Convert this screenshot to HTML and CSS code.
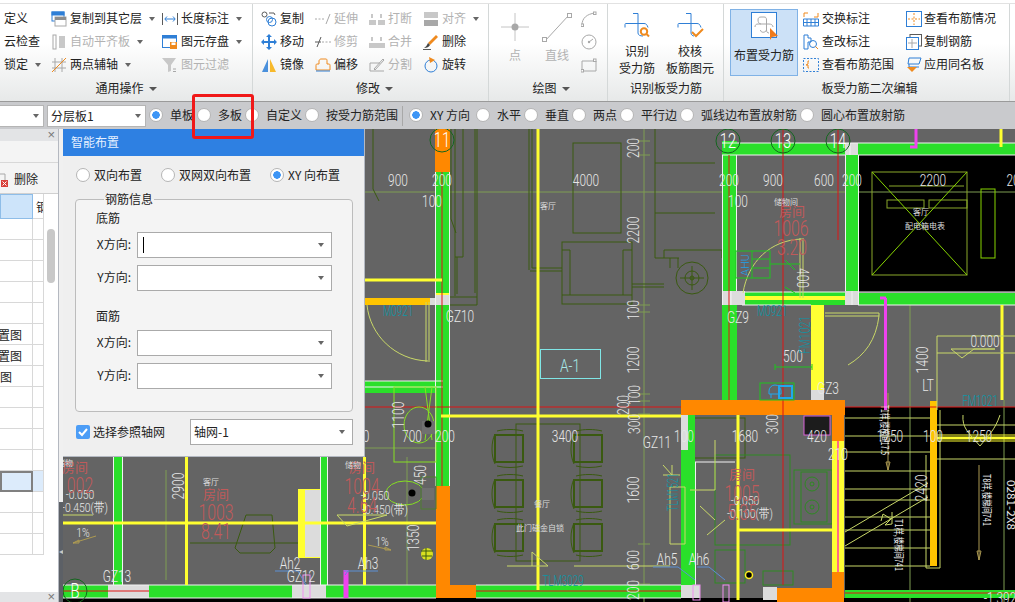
FILE: index.html
```html
<!DOCTYPE html>
<html lang="zh">
<head>
<meta charset="utf-8">
<title>布置受力筋</title>
<link rel="stylesheet" href="styles.css">
</head>
<body>
<div class="app">
  <div class="topline"></div>
  <div class="ribbon">
    <section class="group g1">
      <div class="body">
        <div class="col cola">
          <div class="item">定义</div>
          <div class="item">云检查</div>
          <div class="item">锁定<i class="caret"></i></div>
        </div>
        <div class="col colb">
          <div class="item"><svg class="ic" viewBox="0 0 16 16"><rect class="sb fb" x="1" y="1" width="12" height="3"/><rect class="sb" x="1" y="1" width="12" height="9"/><rect class="fw sg" x="4" y="6" width="11" height="9"/><rect class="fgd" x="4" y="6" width="11" height="3"/></svg>复制到其它层<i class="caret"></i></div>
          <div class="item off"><svg class="ic" viewBox="0 0 16 16"><rect class="sg" x="2" y="1" width="3" height="14"/><rect class="fgl" x="8" y="2" width="6" height="12"/></svg>自动平齐板<i class="caret"></i></div>
          <div class="item"><svg class="ic" viewBox="0 0 16 16"><path class="sg" d="M4 1v14M11 1v14M1 5h14M1 11h14"/><path class="so" d="M1 15L15 1"/></svg>两点辅轴<i class="caret"></i></div>
        </div>
        <div class="col colc">
          <div class="item"><svg class="ic" viewBox="0 0 16 16"><path class="sd" d="M.5 2v12M15.500 2v12"/><path class="sb" d="M3 8h10M5 5.500L2.800 8 5 10.500M11 5.500L13.200 8 11 10.500"/></svg>长度标注<i class="caret"></i></div>
          <div class="item"><svg class="ic" viewBox="0 0 16 16"><rect class="sb" x=".5" y="1.500" width="14" height="12"/><rect class="fb" x=".5" y="1.500" width="14" height="3"/><rect class="fo" x="8" y="8" width="7" height="7"/><rect class="fw" x="9.500" y="8.500" width="4" height="2.500"/></svg>图元存盘<i class="caret"></i></div>
          <div class="item off"><svg class="ic" viewBox="0 0 16 16"><path class="fgl" d="M0 1h14L9 8v6l-3 1V8z"/><path class="sg" d="M11 12h3M11 14.500h3"/></svg>图元过滤</div>
        </div>
      </div>
      <div class="label">通用操作<i class="caret dark"></i></div>
    </section>

    <section class="group g2">
      <div class="body">
        <div class="col c54">
          <div class="item"><svg class="ic" viewBox="0 0 16 16"><circle class="sd" cx="3.500" cy="3.500" r="2.500"/><circle class="sb" cx="11" cy="11" r="4"/><circle class="sb" cx="8.500" cy="8.500" r="3"/><path class="sd" d="M8 2h5l1 2"/></svg>复制</div>
          <div class="item"><svg class="ic" viewBox="0 0 16 16"><path class="fb" d="M8 0l3 3H9v4h4V5l3 3-3 3V9H9v4h2l-3 3-3-3h2V9H3v2L0 8l3-3v2h4V3H5z"/></svg>移动</div>
          <div class="item"><svg class="ic" viewBox="0 0 16 16"><path class="fb2" d="M7 2v13H1z"/><path class="fy" d="M9 2v13h6z"/></svg>镜像</div>
        </div>
        <div class="col c54">
          <div class="item off"><svg class="ic" viewBox="0 0 16 16"><path class="sg dash" d="M0 8h10"/><path class="sg" d="M11 13l4-10"/></svg>延伸</div>
          <div class="item off"><svg class="ic" viewBox="0 0 16 16"><path class="sd" d="M2 13l4-10"/><path class="sd" d="M0 8h6"/><path class="sg dash" d="M7 8h9"/></svg>修剪</div>
          <div class="item"><svg class="ic" viewBox="0 0 16 16"><path class="so" d="M6 2h5c1 0 1 1 1 2v3h2c1 0 1 1 1 2v4H1V9c0-1 0-2 1-2h2V4c0-1 1-2 2-2z"/><path class="sb" d="M1 14h14"/></svg>偏移</div>
        </div>
        <div class="col c54">
          <div class="item off"><svg class="ic" viewBox="0 0 16 16"><path class="fgl" d="M0 9h7v5H0zM9 9h7v5H9zM2 3h2v4H2zM11 3h2v4h-2z"/></svg>打断</div>
          <div class="item off"><svg class="ic" viewBox="0 0 16 16"><path class="fgl" d="M0 9h16v5H0zM2 3h2v4H2zM11 3h2v4h-2z"/></svg>合并</div>
          <div class="item off"><svg class="ic" viewBox="0 0 16 16"><path class="sg" d="M1 14V6l10 0M1 14h14M5 12L14 2l1 1-9 10z"/></svg>分割</div>
        </div>
        <div class="col c54">
          <div class="item off"><svg class="ic" viewBox="0 0 16 16"><rect class="fgl" x="1" y="1" width="14" height="6"/><rect class="fg" x="1" y="9" width="14" height="6"/></svg>对齐<i class="caret"></i></div>
          <div class="item"><svg class="ic" viewBox="0 0 16 16"><path class="fo" d="M5 9l8-8 2 2-8 8z"/><path class="fdk" d="M5 9l2 2c-1 2-3 3-6 3 2-1 3-3 4-5z"/><path class="sd" d="M0 15.500h8"/></svg>删除</div>
          <div class="item"><svg class="ic" viewBox="0 0 16 16"><circle class="sb" cx="8" cy="9" r="6"/><path class="fo" d="M6 0l6 3-5 3z"/></svg>旋转</div>
        </div>
      </div>
      <div class="label">修改<i class="caret dark"></i></div>
    </section>

    <section class="group g3">
      <div class="body">
        <div class="big off w40">
          <div class="bigicon"><svg class="ic32" viewBox="0 0 32 32"><path class="sgl" d="M16 2v28M2 16h28"/><circle class="fg" cx="16" cy="16" r="3.500"/></svg></div>
          <div>点</div>
        </div>
        <div class="big off w40 ml2">
          <div class="bigicon"><svg class="ic32" viewBox="0 0 32 32"><path class="sg" d="M4 30L28 4"/><rect class="fw sg" x="1.500" y="26.500" width="4" height="4"/><rect class="fw sg" x="26.500" y="2.500" width="4" height="4"/></svg></div>
          <div>直线</div>
        </div>
        <div class="col w24">
          <div class="item center"><svg class="ic" viewBox="0 0 16 16"><path class="sg" d="M1 14C1 7 6 3 14 2"/><rect class="fw sg" x="0" y="13" width="2.500" height="2.500"/><rect class="fw sg" x="12.500" y="1" width="2.500" height="2.500"/></svg></div>
          <div class="item center"><svg class="ic" viewBox="0 0 16 16"><circle class="sg" cx="8" cy="8" r="7"/><circle class="fg" cx="8" cy="8" r="1.200"/><path class="sg" d="M8 8l4-3"/></svg></div>
          <div class="item center"><svg class="ic" viewBox="0 0 16 16"><path class="sg" d="M1 4h14v10H1z"/><rect class="fw sg" x="0" y="12.500" width="2.500" height="2.500"/><rect class="fw sg" x="12.500" y="2" width="2.500" height="2.500"/></svg></div>
        </div>
      </div>
      <div class="label">绘图<i class="caret dark"></i></div>
    </section>

    <section class="group g4">
      <div class="body">
        <div class="big w52 ml2">
          <div class="bigicon"><svg class="ic32" viewBox="0 0 32 32"><path class="sb" d="M12 4.500h5V24c0 2 2 3 5 3M4 18.500V15.500c0-1 .5-1 1-1H23c2 0 3 1 4 4"/><circle class="so2" cx="23" cy="22.500" r="3.200"/><path class="so2" d="M25.500 25l2.500 2.500"/></svg></div>
          <div>识别</div><div>受力筋</div>
        </div>
        <div class="big w52">
          <div class="bigicon"><svg class="ic32" viewBox="0 0 32 32"><path class="sb" d="M12 4.500h5V24c0 2 2 3 3 3M4 18.500V15.500c0-1 .5-1 1-1H23c2 0 3 1 4 4"/><path class="so2" d="M18 23l4 4 7-7"/></svg></div>
          <div>校核</div><div>板筋图元</div>
        </div>
      </div>
      <div class="label">识别板受力筋</div>
    </section>

    <section class="group g5">
      <div class="body">
        <div class="bigbtn">
          <svg class="ic-big" viewBox="0 0 34 30"><rect class="fw sb" x=".5" y=".5" width="25" height="25"/><path class="sg" d="M10 5h3c2 0 2.500 1 2.500 3v10c0 2 1 3 2.500 3M4 15c0-2 1-3 3-3h11c2 0 4 1 4 3M10 5c-2 0-3 1-3 3s1 4 3 4M15.500 18c-1 3-6 3-6 0"/><path class="fo2" d="M19 16l8 8-6 1-2 3z"/></svg>
          <div class="bigbtn-label">布置受力筋</div>
        </div>
        <div class="col w103">
          <div class="item"><svg class="ic" viewBox="0 0 16 16"><path class="sb" d="M.5 8h15v7H.5zM4 8v7M8 8v7M12 8v7M.5 11.500h15"/><path class="so" d="M1 6V2h4M15 2v4h-4"/></svg>交换标注</div>
          <div class="item"><svg class="ic" viewBox="0 0 16 16"><path class="sb" d="M1 1h4v3h3v4H5v7H1z"/><circle class="sb" cx="10" cy="10" r="3.500"/><path class="so" d="M12.500 12.500L15 15"/></svg>查改标注</div>
          <div class="item"><svg class="ic" viewBox="0 0 16 16"><rect class="sb dash2" x=".5" y="1.500" width="15" height="13"/><path class="so" d="M6 4H5v3L3 8h2v3h1"/></svg>查看布筋范围</div>
        </div>
        <div class="col tight">
          <div class="item"><svg class="ic" viewBox="0 0 16 16"><rect class="sb" x=".5" y=".5" width="15" height="15"/><path class="so dash2" d="M8 2v12M2 8h12"/></svg>查看布筋情况</div>
          <div class="item"><svg class="ic" viewBox="0 0 16 16"><rect class="sd" x="4" y=".5" width="11.500" height="11.500"/><rect class="fw sb" x=".5" y="3.500" width="12" height="12"/><path class="sg" d="M6 5v9M2 9h9"/></svg>复制钢筋</div>
          <div class="item"><svg class="ic" viewBox="0 0 16 16"><path class="sb" d="M3 1h12l-2 6H2zM3 7v3h10"/><path class="fo" d="M1 10h10l-5 5z"/></svg>应用同名板</div>
        </div>
      </div>
      <div class="label">板受力筋二次编辑</div>
    </section>
  </div>

  <div class="optbar">
    <div class="combo combo1"><i class="caret"></i></div>
    <div class="combo combo2"><span>分层板1</span><i class="caret"></i></div>
    <div class="opt"><i class="radio on"></i>单板</div>
    <div class="opt"><i class="radio"></i>多板</div>
    <div class="opt"><i class="radio"></i>自定义</div>
    <div class="opt"><i class="radio"></i>按受力筋范围</div>
    <div class="vsep"></div>
    <div class="opt xy"><i class="radio on"></i>XY 方向</div>
    <div class="opt"><i class="radio"></i>水平</div>
    <div class="opt"><i class="radio"></i>垂直</div>
    <div class="opt"><i class="radio"></i>两点</div>
    <div class="opt"><i class="radio"></i>平行边</div>
    <div class="opt"><i class="radio"></i>弧线边布置放射筋</div>
    <div class="opt"><i class="radio"></i>圆心布置放射筋</div>
  </div>

  <div class="main">
    <aside class="panel">
      <div class="phead">×</div>
      <div class="pblank"></div>
      <div class="ptools"><svg class="delicon" viewBox="0 0 8 14"><path class="sg" d="M-3 1h8v7"/><rect class="fr" x="1" y="7" width="7" height="7"/><path class="swh" d="M2.500 8.500l4 4M6.500 8.500l-4 4"/></svg><span class="deltext">删除</span></div>
      <div class="ptable">
        <div class="tbl">
          <div class="th sel"></div><div class="th">钢</div>
          <div class="td"></div><div class="td"></div>
          <div class="td"></div><div class="td"></div>
          <div class="td"></div><div class="td"></div>
          <div class="td"></div><div class="td"></div>
          <div class="td"></div><div class="td"></div>
          <div class="td pr10">平面布置图</div><div class="td"></div>
          <div class="td pr10">平面布置图</div><div class="td"></div>
          <div class="td pr20">轴网图</div><div class="td"></div>
          <div class="td"></div><div class="td"></div>
          <div class="td"></div><div class="td"></div>
          <div class="td"></div><div class="td"></div>
          <div class="td"></div><div class="td"></div>
          <div class="td cur"></div><div class="td curb"></div>
          <div class="td"></div><div class="td"></div>
          <div class="td"></div><div class="td"></div>
          <div class="td"></div><div class="td"></div>
        </div>
        <div class="pscroll"><div class="thumb"></div></div>
      </div>
      <div class="pfoot">×</div>
    </aside>
    <div class="strip"><div class="strip-up"></div><div class="strip-down">◂</div></div>

    <svg class="cad" viewBox="63 129 952 473">
      <!-- rooms -->
      <rect class="fk" x="858" y="155" width="157" height="137"/>
      <rect class="fk" x="845" y="407" width="170" height="195"/>
      <rect class="fk" x="63" y="598" width="952" height="4"/>

      <g class="ln ll">
        <path d="M363 192H1015M644 129V602M407 457V585M910 305V408M1004 400V602M910 408V602M166 470V580"/>
        <path d="M638 141h12M638 155h12M638 305h12M638 312h12M638 394h12M638 401h12M638 414h12M638 544h12M638 584h12M365 448h71"/>
      </g>

      <!-- dark green furniture -->
      <g class="ln ld">
        <path d="M373 129v60l6 12M451 129v90l5 14M455 129V296M463 129V257M457 257V294M475 129V293M477 129V305M449 297H477M449 305H477M463 257H455"/>
        <path d="M529 129V270M532 129V268M530 271H562M532 268H562"/>
        <rect x="573" y="143" width="48" height="90"/>
        <rect x="562" y="242" width="70" height="62"/>
        <path d="M562 250h8v45M632 250h-9v45M562 295h70M632 284h32M632 287h32"/>
        <path d="M655 129V258h24M655 163h60M655 213h60M664 250h58v8M664 250v8M670 258v10M678 258v10"/>
        <circle cx="692" cy="278" r="16"/><circle cx="692" cy="278" r="7"/><circle cx="692" cy="278" r="2"/>
        <path d="M680 278h24M692 266v24"/>
        <path d="M190 543H320M246 515H272L275 548 270 553H240L235 548Z"/>
        <rect x="516" y="424" width="64" height="137"/>
        <g id="ch"><rect x="495" y="435" width="28" height="27" class="thick"/><path d="M497 431c8-2 18-2 26 0M497 466c8 2 18 2 26 0M495 434c-4 8-4 22 0 30"/></g>
        <use href="#ch" y="45"/><use href="#ch" y="89"/>
        <use href="#ch" x="79"/><use href="#ch" x="79" y="45"/><use href="#ch" x="79" y="89"/>
        <rect x="692" y="418" width="53" height="40"/>
        <rect x="715" y="455" width="75" height="90" class="d2"/>
        <rect x="794" y="470" width="38" height="54" class="d2"/>
        <rect x="801" y="472" width="26" height="50" class="d2"/>
        <circle cx="812" cy="484" r="7" class="d2"/><circle cx="812" cy="484" r="2" class="d2"/>
        <circle cx="812" cy="507" r="7" class="d2"/><circle cx="812" cy="507" r="2" class="d2"/>
        <rect x="715" y="550" width="30" height="33" class="d2"/><rect x="763" y="571" width="30" height="14" class="d2"/>
      </g>

      <!-- walls -->
      <rect class="fo1" x="435" y="129" width="15" height="43"/>
      <rect class="fg1" x="435" y="172" width="15" height="121"/>
      <rect class="fg1" x="435" y="305" width="15" height="181"/>
      <rect class="fe" x="435" y="293" width="15" height="12"/>
      <rect class="fy1" x="435" y="293" width="15" height="2"/>
      <rect class="fg1" x="365" y="381" width="78" height="12"/>
      <rect class="fo1" x="436" y="486" width="14" height="99"/>
      <rect class="fo1" x="436" y="585" width="40" height="13"/>
      <rect class="fg1" x="476" y="585" width="205" height="13"/>
      <rect class="fg1" x="63" y="585" width="373" height="13"/>
      <rect class="fe" x="108" y="585" width="41" height="13"/>
      <rect class="fe" x="292" y="585" width="34" height="13"/>
      <rect class="fg1" x="845" y="590" width="170" height="8"/>
      <rect class="fg1" x="722" y="143" width="293" height="12"/>
      <rect class="fg1" x="722" y="141" width="15" height="150"/>
      <rect class="fg1" x="722" y="305" width="15" height="95"/>
      <rect class="fg1" x="845" y="155" width="13" height="137"/>
      <rect class="fg1" x="858" y="293" width="157" height="12"/>
      <rect class="fg1" x="742" y="292" width="103" height="13"/>
      <rect class="fy1" x="742" y="296" width="103" height="4"/>
      <rect class="fe" x="723" y="291" width="22" height="14"/>
      <rect class="fe" x="845" y="143" width="13" height="12"/>
      <rect class="fe" x="845" y="291" width="13" height="14"/>
      <rect class="fy1" x="811" y="305" width="13" height="85"/>
      <rect class="fe" x="811" y="390" width="13" height="10"/>
      <rect class="fg1" x="113" y="457" width="9" height="128"/>
      <rect class="fg1" x="321" y="457" width="6" height="128"/>
      <rect class="fe" x="681" y="415" width="7" height="35"/>
      <rect class="fg1" x="688" y="415" width="7" height="170"/>
      <rect class="fg1" x="681" y="450" width="7" height="135"/>
      <rect class="fo1" x="681" y="400" width="164" height="15"/>
      <rect class="fo1" x="832" y="415" width="12" height="26"/>
      <rect class="fy1" x="832" y="441" width="12" height="131"/>
      <rect class="fo1" x="832" y="572" width="12" height="30"/>
      <rect class="fo1" x="777" y="588" width="67" height="14"/>
      <rect class="fe" x="681" y="585" width="19" height="13"/>
      <rect class="fe" x="763" y="587" width="14" height="13"/>
      <rect class="fa" x="930" y="401" width="7" height="165"/>
      <rect class="fa" x="365" y="298" width="66" height="7"/>
      <rect class="fe" x="430" y="298" width="18" height="7"/>
      <rect class="fy1" x="298" y="489" width="22" height="69"/>
      <rect class="fe" x="305" y="490" width="15" height="67"/>

      <g class="ln lw">
        <path d="M435.500 172V486M449.500 172V486M736.500 155V291M722.500 155V305M858.500 155V305M845.500 155V291M722 143h293M722 155h123M858 155h157M858 292h157M858 305h157M742 292h103M742 305h69M365 381h78M365 387h78M113.500 457V585M122.500 457V585M320.500 457V585M327.500 457V585M63 585h373M476 585h205M476 598h205M63 598h373M731 305V291M850 143V155M730 291v14M852 291v14"/>
        <path d="M695.500 462V585M695 462h40"/>
      </g>

      <g class="ln lr">
        <path d="M442 172V486M729 155V400M783 129V585M838 129V240M365 407H681M845 407H1015M63 591H108M108 591H149M476 591H681M845 593H1015"/>
      </g>
      <path class="ln lpk" d="M838 441V572"/>

      <g class="ln ly3">
        <path d="M365 280H442M538 129V590M441 416H681M63 523H436M186.500 457V585M364.500 457V585M738 530H832M738 415V600"/>
        <path d="M1001 129V147M1002 305V400M300 490V558M303 490V558"/>
        <path d="M937 438H1015"/>
      </g>
      <path class="ln ly4" d="M937 435H1015M937 441H1015"/>

      <!-- light yellow-green lines -->
      <g class="ln lc">
        <path d="M367 305C370 335 395 360 428 361M426 302V362M429 302V362"/>
        <path d="M743 293C748 262 770 240 802 239M800 238V298M803 238V298"/>
        <path d="M825 313H879V316H825M879 316C876 340 865 355 848 365"/>
        <path d="M937 336V410M937 336H1015M937 353H1015M951 349H995L974 349 962 358 951 349"/>
        <path d="M963 415C962 428 968 432 980 446M1000 415C995 430 988 436 980 446"/>
        <path d="M845 418H930M845 436H930M845 452H930M845 471H930M845 489H930M845 500H930M845 517H930M845 530H930M845 548H930M845 566H930M937 425H1015M937 459H1015"/>
        <path d="M845 532L928 483M845 546L928 497M881 521L883 514 891 519 885 525 892 524 892 512"/>
        <path d="M926 455V568H940V410"/>
        <path d="M63 515H93M337 515H387L347 526 337 515"/>
        <path d="M574 566H670M507 566H548L532 552 532 566M670 487H685V544H670ZM715 440V490H690"/>
        <path d="M663 465L672 475M672 465V475M663 475H680M700 506L715 520M707 535L725 520"/>
      </g>
      <g class="ln lt">
        <path d="M73 543L96 536M368 545L391 550M888 393V470M979 465V560"/>
        <path d="M888 470l-2-8h4zM979 560l-2-9h4zM73 543l6-3 0 3zM391 550l-6-3 0 3z"/>
      </g>

      <!-- black room -->
      <g class="ln lgy">
        <rect x="872" y="172" width="95" height="103"/>
        <rect x="887" y="200" width="37" height="8"/><rect x="929" y="200" width="38" height="8"/>
        <path d="M889 186H964"/>
      </g>
      <g class="ln lgb">
        <path d="M872 172L967 275M967 172L872 275"/>
        <rect x="981" y="189" width="14" height="69"/>
      </g>

      <!-- bright green fixtures -->
      <g class="ln lbg">
        <rect x="736" y="251" width="34" height="27"/>
        <path d="M752 251V278M752 259H770M752 268H770M770 264H800M785 260L795 270M785 287L795 293M775 367H812M775 364V370M812 364V370"/>
        <rect x="760" y="383" width="34" height="17"/>
        <rect x="394" y="387" width="42" height="75" class="lg2"/>
        <ellipse cx="419" cy="425" rx="15" ry="18" class="lg2"/><ellipse cx="405" cy="493" rx="19" ry="12" class="lg2"/>
        <path d="M425 387L432 440M432 387L425 440" class="lg2"/>
        <path d="M421 477h15v32h-15z" class="d3"/>
      </g>
      <g class="ln lbl"><path d="M769 391a6 6 0 0 1 12 0v3h-12zM771 394v4M779 394v4"/><rect x="779" y="386" width="13" height="12" class="bl2"/></g>
      <path class="fdg" d="M422 488h12v12h-12zM422 421h13v13h-13z"/>
      <circle class="fk" cx="412" cy="493" r="3.500"/><circle class="fk" cx="428" cy="424" r="3.500"/>
      <circle class="fbk2" cx="749" cy="575" r="3.500"/>
      <circle class="fyy" cx="427" cy="554" r="6"/><path class="ln ld" d="M421 551h12M422 556h10M426 548v12"/>

      <!-- magenta and blue -->
      <g class="ln lm">
        <path d="M916 129V147H910"/>
        <path d="M885.500 298V410M880 298h6M345 570V598M347 570V598"/>
        <rect x="804" y="416" width="26" height="19" class="fbl"/>
        <rect x="303" y="575" width="7" height="23" class="mm"/><rect x="693" y="585" width="7" height="15" class="mm"/><rect x="723" y="585" width="6" height="17" class="mm"/>
      </g>
      <g class="ln lb"><path d="M275 571H298L306 585M344 571H378M653 567H678L695 580M697 567H709L725 580M348 571L345 575"/></g>
      <rect class="ca" x="540.500" y="349.500" width="60" height="29"/>

      <!-- axes -->
      <g class="ln lax">
        <circle cx="442" cy="140" r="12"/><circle cx="728" cy="141" r="12"/><circle cx="783" cy="141" r="12"/><circle cx="838" cy="141" r="12"/><circle cx="75" cy="591" r="12"/>
      </g>
      <g class="txt big17">
        <text x="442" y="147">11</text><text x="728" y="148">12</text><text x="783" y="148">13</text><text x="838" y="148">14</text><text x="75" y="598">B</text>
      </g>

      <!-- dimensions -->
      <g class="txt">
        <text x="398" y="186">900</text><text x="442" y="186">200</text><text x="432" y="207">100</text>
        <text x="586" y="186">4000</text><text x="729" y="186">200</text><text x="773" y="186">900</text>
        <text x="824" y="186">600</text><text x="852" y="186">200</text><text x="738" y="207">100</text>
        <text x="933" y="186">2200</text><text x="1013" y="186">20</text>
        <text x="460" y="322">GZ10</text><text x="738" y="323">GZ9</text><text x="793" y="362">500</text>
        <text x="985" y="347">0.000</text><text x="828" y="394">GZ3</text><text x="928" y="391">LT</text>
        <text x="745" y="442">1680</text><text x="817" y="442">420</text><text x="890" y="442">1250</text>
        <text x="933" y="442">100</text><text x="979" y="442">1250</text><text x="838" y="460">210</text>
        <text x="565" y="442">3400</text><text x="445" y="442">200</text><text x="412" y="442">700</text>
        <text x="366" y="442">0</text><text x="657" y="448">GZ11</text><text x="684" y="442">100</text>
        <text x="667" y="565">Ah5</text><text x="699" y="565">Ah6</text><text x="290" y="569">Ah2</text>
        <text x="368" y="569">Ah3</text><text x="117" y="582">GZ13</text><text x="301" y="582">GZ12</text>
        <text x="1000" y="604">-1.392</text>
        <g class="sm">
          <text x="80" y="499">-0.050</text><text x="85" y="512">-0.450(带)</text>
          <text x="375" y="500">-0.050</text><text x="385" y="514">-0.450(带)</text>
          <text x="745" y="505">-0.050</text><text x="750" y="518">-0.100(带)</text>
          <text x="83" y="537">1%</text><text x="382" y="546">1%</text>
        </g>
      </g>
      <g class="rot">
        <text transform="rotate(-90 633 148)" x="633" y="154" textLength="20" lengthAdjust="spacingAndGlyphs">200</text>
        <text transform="rotate(-90 633 230)" x="633" y="236" textLength="27" lengthAdjust="spacingAndGlyphs">2200</text>
        <text transform="rotate(-90 633 310)" x="633" y="316" textLength="20" lengthAdjust="spacingAndGlyphs">100</text>
        <text transform="rotate(-90 633 360)" x="633" y="366" textLength="27" lengthAdjust="spacingAndGlyphs">1200</text>
        <text transform="rotate(-90 634 395)" x="634" y="401" textLength="20" lengthAdjust="spacingAndGlyphs">100</text>
        <text transform="rotate(-90 623 405)" x="623" y="411" textLength="20" lengthAdjust="spacingAndGlyphs">200</text>
        <text transform="rotate(-90 634 424)" x="634" y="430" textLength="20" lengthAdjust="spacingAndGlyphs">300</text>
        <text transform="rotate(-90 633 490)" x="633" y="496" textLength="27" lengthAdjust="spacingAndGlyphs">1600</text>
        <text transform="rotate(-90 633 560)" x="633" y="566" textLength="20" lengthAdjust="spacingAndGlyphs">600</text>
        <text transform="rotate(-90 633 590)" x="633" y="596" textLength="20" lengthAdjust="spacingAndGlyphs">200</text>
        <text transform="rotate(90 803 278)" x="803" y="284" textLength="20" lengthAdjust="spacingAndGlyphs">400</text>
        <text transform="rotate(-90 922 360)" x="922" y="366" textLength="27" lengthAdjust="spacingAndGlyphs">1400</text>
        <text transform="rotate(-90 772 424)" x="772" y="430" textLength="20" lengthAdjust="spacingAndGlyphs">300</text>
        <text transform="rotate(-90 921 488)" x="921" y="494" textLength="27" lengthAdjust="spacingAndGlyphs">2420</text>
        <text transform="rotate(-90 178 486)" x="178" y="492" textLength="27" lengthAdjust="spacingAndGlyphs">2900</text>
        <text transform="rotate(-90 398 415)" x="398" y="421" textLength="27" lengthAdjust="spacingAndGlyphs">1100</text>
        <text transform="rotate(-90 413 538)" x="413" y="544" textLength="27" lengthAdjust="spacingAndGlyphs">1350</text>
        <text transform="rotate(-90 420 475)" x="420" y="481" textLength="20" lengthAdjust="spacingAndGlyphs">450</text>
      </g>
      <g class="rot tiny">
        <text transform="rotate(90 884 430)" x="884" y="433" textLength="50" lengthAdjust="spacingAndGlyphs">T1样,楼梯间17.5</text>
        <text transform="rotate(90 898 545)" x="898" y="548" textLength="52" lengthAdjust="spacingAndGlyphs">T1样,楼梯间741</text>
        <text transform="rotate(90 986 500)" x="986" y="503" textLength="52" lengthAdjust="spacingAndGlyphs">T8样,楼梯间741</text>
        <text transform="rotate(90 1010 505)" x="1010" y="508" textLength="50" lengthAdjust="spacingAndGlyphs">0281-2X8</text>
      </g>
      <g class="red">
        <text x="791" y="236">1006</text><text x="792" y="255">3.20</text>
        <text x="216" y="520">1003</text><text x="216" y="539">8.41</text>
        <text x="80" y="493">002</text><text x="362" y="494">1004</text><text x="362" y="513">4.64</text>
        <text x="742" y="501">1005</text><text x="742" y="520">5.35</text>
      </g>
      <g class="redcn">
        <text x="792" y="216">房间</text><text x="75" y="472">房间</text><text x="216" y="499">房间</text><text x="362" y="472">房间</text><text x="742" y="479">房间</text>
      </g>
      <g class="teal">
        <text x="398" y="316">M0921</text><text x="772" y="316">M0921</text><text x="563" y="586">TLM3029</text><text x="980" y="406">FM1021</text>
      </g>
      <g class="tealr">
        <text transform="rotate(-90 805 335)" x="805" y="340" textLength="38" lengthAdjust="spacingAndGlyphs">FM1021</text>
        <text transform="rotate(-90 673 492)" x="673" y="497" textLength="38" lengthAdjust="spacingAndGlyphs">TLM1521</text>
      </g>
      <text class="ac" transform="rotate(-90 745 265)" x="745" y="269">AHU</text>
      <text class="aone" x="570" y="372" textLength="20" lengthAdjust="spacingAndGlyphs">A-1</text>
      <g class="mini">
        <text x="548" y="209">客厅</text><text x="786" y="205">储物间</text><text x="921" y="215">客厅</text><text x="925" y="229">配电箱电表</text>
        <text x="542" y="507">餐厅</text><text x="540" y="531">此门磁金自锁</text><text x="211" y="485">客厅</text>
        <text x="353" y="468">储物</text><text x="65" y="466">储物</text>
      </g>
    </svg>
  </div>

  <div class="dialog">
    <div class="dhead">智能布置</div>
    <div class="dradios">
      <div class="dopt"><i class="radio"></i>双向布置</div>
      <div class="dopt m19"><i class="radio"></i>双网双向布置</div>
      <div class="dopt m19"><i class="radio on"></i>XY 向布置</div>
    </div>
    <fieldset class="fs">
      <legend>钢筋信息</legend>
      <div class="ftitle">底筋</div>
      <div class="frow"><label>X方向:</label><div class="fin"><b class="cursor"></b><i class="caret"></i></div></div>
      <div class="frow"><label>Y方向:</label><div class="fin"><i class="caret"></i></div></div>
      <div class="ftitle gap">面筋</div>
      <div class="frow"><label>X方向:</label><div class="fin"><i class="caret"></i></div></div>
      <div class="frow"><label>Y方向:</label><div class="fin"><i class="caret"></i></div></div>
    </fieldset>
    <div class="dfoot">
      <div class="chk"><svg viewBox="0 0 14 14"><path class="swh2" d="M3 7l3 3 5-6"/></svg></div>
      <span class="chklabel">选择参照轴网</span>
      <div class="fin sel"><span>轴网-1</span><i class="caret"></i></div>
    </div>
  </div>

  <div class="highlight"></div>
</div>
</body>
</html>
```
FILE: styles.css
```css
* { box-sizing: border-box; }
html, body { margin: 0; padding: 0; }
body { width: 1015px; height: 602px; overflow: hidden; background: #fff; font: 12px/1.2 "Noto Sans CJK SC", "Noto Sans", sans-serif; color: #222; }
i { font-style: normal; }
.app { position: relative; width: 1015px; height: 602px; overflow: hidden; }
.topline { height: 4px; background: #fff; border-bottom: 1px solid #e2e2e2; }

/* ribbon */
.ribbon { display: flex; height: 98px; background: linear-gradient(#fff 40%, #e7e9e9); border-bottom: 1px solid #9a9a9a; }
.group { display: flex; flex-direction: column; padding-top: 3px; border-right: 1px solid #d4d8d8; }
.g1 { width: 253px; }
.g2 { width: 236px; padding-left: 8px; }
.g3 { width: 119px; padding-left: 6px; }
.g4 { width: 116px; padding-left: 1px; }
.g5 { width: 286px; padding-left: 6px; }
.body { display: flex; height: 69px; }
.label { height: 25px; display: flex; align-items: center; justify-content: center; gap: 5px; }
.col { display: flex; flex-direction: column; }
.cola { width: 51px; padding-left: 4px; }
.colb { width: 111px; }
.colc { width: 90px; }
.c54 { width: 54px; }
.w24 { width: 24px; }
.w103 { width: 103px; margin-left: 5px; }
.item { height: 23px; display: flex; align-items: center; gap: 3px; white-space: nowrap; }
.tight .item { gap: 2px; }
.item.center { justify-content: center; }
.off { color: #b2b2b2; }
.caret { display: inline-block; width: 0; height: 0; border: 3px solid transparent; border-top: 4px solid #666; border-bottom: 0; margin-left: 4px; }
.caret.dark { border-top-color: #555; border-left-width: 4px; border-right-width: 4px; border-top-width: 4px; margin-left: 0; }
.ic { width: 16px; height: 16px; flex: none; fill: none; }
.ic32 { width: 32px; height: 32px; fill: none; }
.big { display: flex; flex-direction: column; align-items: center; line-height: 17px; white-space: nowrap; }
.w40 { width: 40px; }
.w52 { width: 52px; margin-left: 1px; }
.ml2 { margin-left: 2px; }
.bigicon { height: 39px; display: flex; align-items: center; justify-content: center; }
.bigbtn { width: 68px; height: 67px; margin-top: 2px; background: #cce1f7; border: 1px solid #80b2e6; display: flex; flex-direction: column; align-items: center; padding-top: 2px; white-space: nowrap; }
.ic-big { width: 34px; height: 30px; margin-left: 8px; fill: none; flex: none; }
.bigbtn-label { margin-top: 6px; }
.sb { stroke: #2f7fd6; stroke-width: 1; }
.sg { stroke: #a8a8a8; stroke-width: 1; }
.sgl { stroke: #c4c4c4; stroke-width: 1; }
.sd { stroke: #5a5a5a; stroke-width: 1; }
.so { stroke: #ef8a1e; stroke-width: 1; }
.so2 { stroke: #ef8a1e; stroke-width: 2; }
.swh { stroke: #fff; stroke-width: 1; }
.swh2 { stroke: #fff; stroke-width: 2; fill: none; }
.dash { stroke-dasharray: 2 1.500; }
.dash2 { stroke-dasharray: 2 1.500; }
.fb { fill: #2f7fd6; }
.fb2 { fill: #4a90dc; }
.fy { fill: #f7b92b; }
.fo { fill: #ef8a1e; }
.fo2 { fill: #f07a1a; }
.fw { fill: #fff; }
.fg { fill: #a8a8a8; }
.fgl { fill: #c8c8c8; }
.fgd { fill: #8e8e8e; }
.fdk { fill: #444; }
.fr { fill: #d9403a; }

/* option bar */
.optbar { height: 27px; background: #c9cacd; display: flex; align-items: center; gap: 3px; }
.combo { height: 22px; margin-top: 1px; background: #fff; border: 1px solid #b5b5b5; display: flex; align-items: center; justify-content: space-between; padding: 0 4px 0 3px; white-space: nowrap; }
.combo1 { width: 44px; justify-content: flex-end; border-left: 0; }
.combo2 { width: 99px; }
.opt { display: flex; align-items: center; gap: 7px; white-space: nowrap; }
.xy { margin-right: 3px; }
.vsep { width: 1px; height: 20px; background: #a8a8a8; margin: 0 3px 0 1px; }
.radio { width: 14px; height: 14px; flex: none; border-radius: 50%; background: #fff; border: 1px solid #b5b5b5; display: inline-block; }
.radio.on { background: radial-gradient(circle, #3d95f5 0 3.500px, #fff 4px); }

/* main */
.main { display: flex; height: 473px; }
.panel { width: 59px; flex: none; display: flex; flex-direction: column; background: #fff; border-right: 1px solid #b4b8c0; }
.phead, .pfoot { background: #e3e4e6; color: #777; text-align: right; padding-right: 3px; font: 13px/12px "Liberation Sans", sans-serif; height: 12px; }
.pfoot { height: 10px; line-height: 10px; }
.pblank { height: 22px; background: #f4f4f4; border-bottom: 1px solid #d8d8d8; }
.ptools { height: 31px; padding-top: 3px; background: #f4f4f4; border-bottom: 1px solid #d0d0d0; display: flex; align-items: center; white-space: nowrap; }
.delicon { width: 8px; height: 14px; fill: none; flex: none; }
.deltext { margin-left: 6px; }
.ptable { flex: 1; display: flex; min-height: 0; }
.tbl { width: 44px; display: grid; grid-template-columns: 33px 11px; grid-template-rows: 25px; grid-auto-rows: 21px; align-content: start; }
.th { height: 25px; border-right: 1px solid #d8d8d8; border-bottom: 1px solid #d8d8d8; overflow: hidden; line-height: 25px; padding-left: 3px; white-space: nowrap; }
.th.sel { background: #cde4fa; border: 1px solid #8ebde8; }
.td { border-bottom: 1px solid #d8d8d8; border-right: 1px solid #d8d8d8; overflow: hidden; white-space: nowrap; display: flex; justify-content: flex-end; align-items: center; padding-top: 2px; }
.pr10 { padding-right: 10px; }
.pr20 { padding-right: 20px; }
.cur { background: #dcebfb; border: 2px solid #808080; }
.curb { background: #dcebfb; }
.pscroll { width: 14px; padding: 35px 0 0 3px; }
.thumb { width: 8px; height: 54px; background: #c8c8c8; border-radius: 4px; }
.strip { width: 4px; flex: none; display: flex; flex-direction: column; }
.strip-up { height: 373px; background: #f0f0f0; }
.strip-down { flex: 1; background: #5c6066; color: #c8c8c8; font: 8px/100px "Liberation Sans", sans-serif; overflow: hidden; }

/* cad */
.cad { width: 952px; height: 473px; flex: none; background: #646464; display: block; }
.ln { fill: none; stroke-width: 1; }
.ll { stroke: #7e9d52; }
.ld { stroke: #3a5a10; }
.thick { stroke-width: 2; }
.d2 { stroke: #2e8a22; }
.d3 { stroke: #4f7f30; }
.lw { stroke: #f2f2f2; }
.lr { stroke: #de1414; }
.lpk { stroke: #ff6a88; stroke-width: 2; }
.ly3 { stroke: #ffff30; stroke-width: 3; }
.ly4 { stroke: #ffff30; stroke-width: 1; }
.lc { stroke: #c9d868; }
.lt { stroke: #ad9a52; }
.lgy { stroke: #8aa82a; }
.lgb { stroke: #86d400; }
.lbg { stroke: #1fc41f; }
.lg2 { stroke: #86e022; }
.lbl { stroke: #20a8ec; }
.bl2 { stroke-width: 2; }
.lm { stroke: #ee42ee; stroke-width: 3; }
.fbl { fill: #1c1c1c; stroke-width: 1; stroke: #d860d8; }
.mm { stroke-width: 1; stroke: #f090f0; }
.lb { stroke: #5c90d4; }
.lax { stroke: #14661e; }
.ca { fill: none; stroke: #80e6e6; }
.fk { fill: #000; }
.fbk2 { fill: #000; stroke: #ffee20; stroke-width: 1.500; }
.fyy { fill: #d8e020; }
.fdg { fill: #707070; }
.fg1 { fill: #2adf2a; }
.fo1 { fill: #ff8800; }
.fy1 { fill: #ffff33; }
.fa { fill: #ffc400; }
.fe { fill: #dcdcdc; }
.cad text { text-anchor: middle; font-family: Roboto, "Liberation Sans", sans-serif; font-weight: 300; }
.txt text, .red text, .teal text { transform-box: fill-box; transform-origin: center; }
.txt text { font-size: 17px; fill: #e8e8e8; transform: scaleX(.7); }
.big17 text { font-size: 21px; fill: #fff; }
.txt .sm text { font-size: 13px; transform: scaleX(.8); }
.rot text { font-size: 17px; fill: #e8e8e8; }
.cad .tiny text { font-size: 10px; font-family: "Noto Sans CJK SC", sans-serif; font-weight: 400; fill: #eee; }
.red text { font-size: 22px; fill: #c05a5a; transform: scaleX(.72); }
.cad .redcn text { font-size: 13px; font-family: "Noto Sans CJK SC", sans-serif; font-weight: 400; fill: #c05a5a; }
.teal text { font-size: 14px; fill: #0a97a8; transform: scaleX(.7); }
.tealr text { font-size: 14px; fill: #0a97a8; }
.cad .ac { font-size: 11px; fill: #20a0e8; }
.cad .aone { font-size: 18px; fill: #a8e8e8; }
.cad .mini text { font-size: 8px; font-family: "Noto Sans CJK SC", sans-serif; font-weight: 400; fill: #dcdcdc; }

/* dialog */
.dialog { position: absolute; left: 63px; top: 129px; width: 302px; height: 328px; background: #efefef; border-right: 1px solid #b4b9c2; border-bottom: 1px solid #b4b9c2; }
.dhead { height: 27px; background: #2e80e2; color: #e6f0ff; padding-left: 8px; display: flex; align-items: center; }
.dradios { display: flex; margin: 12px 0 0 13px; height: 14px; }
.dopt { display: flex; align-items: center; gap: 4px; white-space: nowrap; }
.m19 { margin-left: 19px; }
.fs { width: 278px; height: 221px; margin: 9px 0 0 12px; padding: 0 0 0 20px; background: #f4f4f4; border: 1px solid #bcbcbc; border-radius: 4px; min-width: 0; }
.fs legend { padding: 0 1px; margin-left: 8px; line-height: 16px; }
.ftitle { height: 18px; line-height: 18px; margin: 2px 0 5px; }
.ftitle.gap { margin-top: 16px; }
.frow { display: flex; height: 26px; margin-bottom: 7px; align-items: stretch; }
.frow label { width: 35px; text-align: right; margin-right: 6px; line-height: 24px; white-space: nowrap; }
.fin { width: 195px; height: 26px; background: #fff; border: 1px solid #aaa; display: flex; align-items: center; padding: 0 7px 0 5px; }
.fin .caret { margin-left: auto; }
.cursor { width: 1px; height: 16px; background: #000; }
.dfoot { display: flex; align-items: center; height: 26px; margin: 7px 0 0 13px; }
.chk { width: 14px; height: 14px; background: #4c9df6; border-radius: 2px; }
.chk svg { display: block; width: 14px; height: 14px; }
.chklabel { margin-left: 3px; white-space: nowrap; }
.fin.sel { width: 163px; margin-left: 25px; padding-left: 3px; }

.highlight { position: absolute; left: 192px; top: 94px; width: 62px; height: 45px; border: 3px solid #f01818; border-radius: 3px; pointer-events: none; }
```
